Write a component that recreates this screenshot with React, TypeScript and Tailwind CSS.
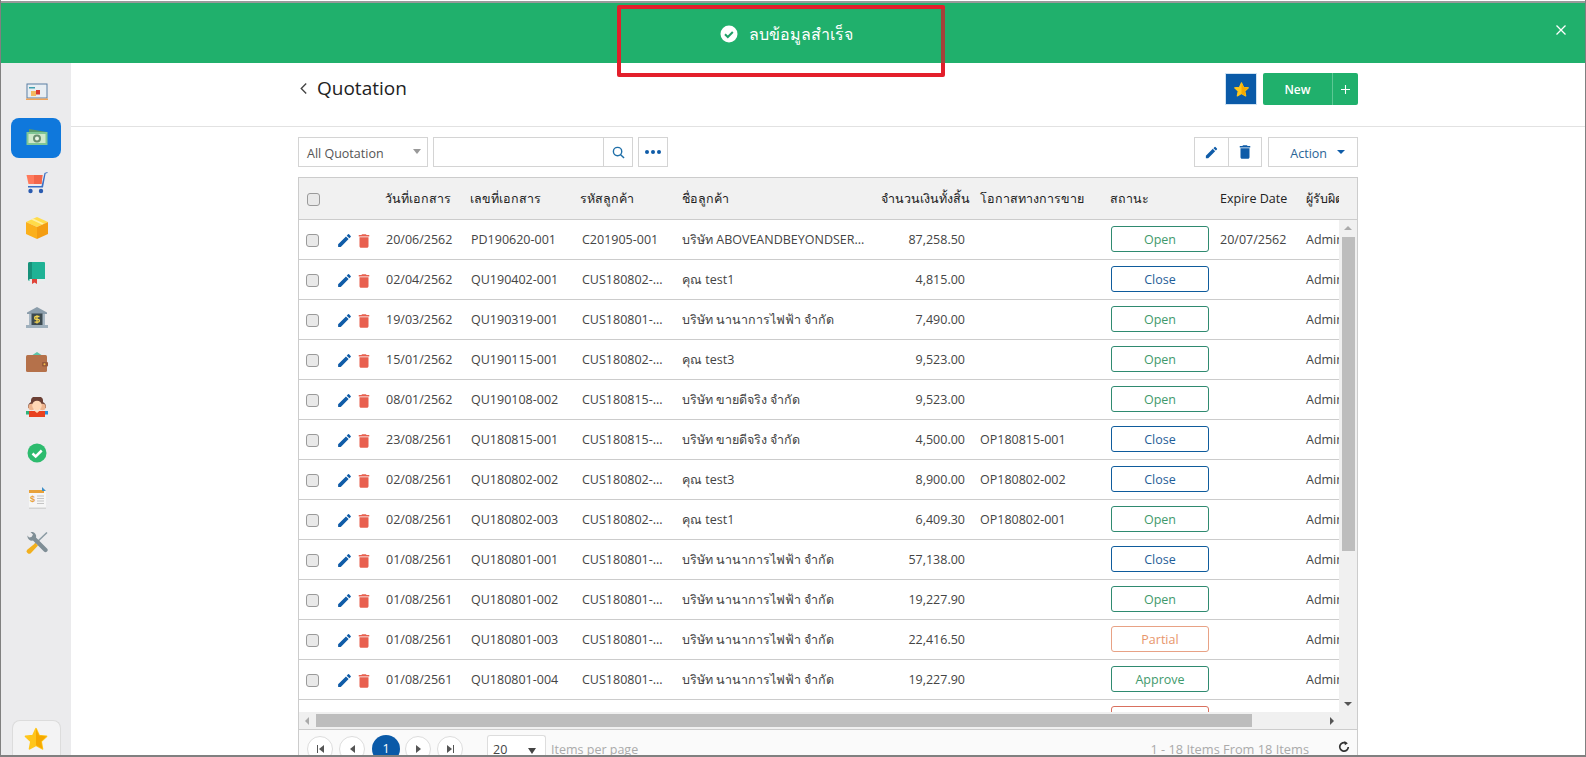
const rows = [
  ['20/06/2562', 'PD190620-001', 'C201905-001', 'บริษัท ABOVEANDBEYONDSER...', '87,258.50', '', 'Open', '20/07/2562'],
  ['02/04/2562', 'QU190402-001', 'CUS180802-...', 'คุณ test1', '4,815.00', '', 'Close', ''],
  ['19/03/2562', 'QU190319-001', 'CUS180801-...', 'บริษัท นานาการไฟฟ้า จำกัด', '7,490.00', '', 'Open', ''],
  ['15/01/2562', 'QU190115-001', 'CUS180802-...', 'คุณ test3', '9,523.00', '', 'Open', ''],
  ['08/01/2562', 'QU190108-002', 'CUS180815-...', 'บริษัท ขายดีจริง จำกัด', '9,523.00', '', 'Open', ''],
  ['23/08/2561', 'QU180815-001', 'CUS180815-...', 'บริษัท ขายดีจริง จำกัด', '4,500.00', 'OP180815-001', 'Close', ''],
  ['02/08/2561', 'QU180802-002', 'CUS180802-...', 'คุณ test3', '8,900.00', 'OP180802-002', 'Close', ''],
  ['02/08/2561', 'QU180802-003', 'CUS180802-...', 'คุณ test1', '6,409.30', 'OP180802-001', 'Open', ''],
  ['01/08/2561', 'QU180801-001', 'CUS180801-...', 'บริษัท นานาการไฟฟ้า จำกัด', '57,138.00', '', 'Close', ''],
  ['01/08/2561', 'QU180801-002', 'CUS180801-...', 'บริษัท นานาการไฟฟ้า จำกัด', '19,227.90', '', 'Open', ''],
  ['01/08/2561', 'QU180801-003', 'CUS180801-...', 'บริษัท นานาการไฟฟ้า จำกัด', '22,416.50', '', 'Partial', ''],
  ['01/08/2561', 'QU180801-004', 'CUS180801-...', 'บริษัท นานาการไฟฟ้า จำกัด', '19,227.90', '', 'Approve', ''],
  ['', '', '', '', '', '', 'Cancel', ''],
]

const pill: Record<string, string> = {
  Open: 'border-[#2f8a70] text-[#3f9a6c]',
  Approve: 'border-[#2f8a70] text-[#3f9a6c]',
  Close: 'border-[#0f5c9c] text-[#1f6098]',
  Partial: 'border-[#e8a285] text-[#e8966c]',
  Cancel: 'border-[#d9705e] text-[#d9705e]',
}

const cols = 'grid grid-cols-[80px_84px_111px_100px_169px_129px_130px_110px_86px_42px]'

function Pencil({ className }: { className: string }) {
  return (
    <svg viewBox="0 0 24 24" className={className} fill="currentColor">
      <path d="M3 17.25V21h3.75L17.81 9.94l-3.75-3.75L3 17.25zM20.71 7.04a1 1 0 0 0 0-1.41l-2.34-2.34a1 1 0 0 0-1.41 0l-1.83 1.83 3.75 3.75 1.83-1.83z" />
    </svg>
  )
}

function Trash({ className }: { className: string }) {
  return (
    <svg viewBox="0 0 24 24" className={className} fill="currentColor">
      <path d="M6 19c0 1.1.9 2 2 2h8c1.1 0 2-.9 2-2V7H6v12zM19 4h-3.5l-1-1h-5l-1 1H5v2h14V4z" />
    </svg>
  )
}

function Star({ className }: { className: string }) {
  return (
    <svg viewBox="0 0 24 24" className={className}>
      <path fill="#ffc61b" stroke="#ffc61b" strokeWidth="1.5" strokeLinejoin="round" d="M12 2.5l2.9 6.3 6.8.8-5 4.7 1.3 6.8-6-3.4-6 3.4 1.3-6.8-5-4.7 6.8-.8z" />
      <path fill="#f5a800" d="M12 2.5l2.9 6.3 6.8.8-5 4.7 1.3 6.8-6-3.4z" />
    </svg>
  )
}

function Checkbox() {
  return <div className="h-[13px] w-[13px] rounded-[3px] border border-[#9a9a9a] bg-[#e9e9e9]" />
}

// sidebar drawings, all on a 22 unit box
const sideIcons = [
  <>
    <rect x="0.5" y="1.5" width="21" height="15" fill="#5b7fa3" />
    <rect x="1.5" y="2.500" width="19" height="13" fill="#e8eef3" />
    <rect x="3" y="5" width="6" height="1.5" fill="#3fa0b0" />
    <rect x="5" y="9" width="5" height="5" fill="#f4b860" />
    <rect x="10" y="8" width="4" height="4.5" fill="#d8372f" />
    <rect x="0" y="16.500" width="22" height="1.5" fill="#f0a458" />
  </>,
  <>
    <path d="M3 2l18 3v3H3z" fill="#5a9a6a" />
    <rect x="0.5" y="5" width="21" height="13" fill="#7fc795" />
    <rect x="2.5" y="7" width="17" height="9" fill="#cfeacb" />
    <circle cx="11" cy="11.5" r="4" fill="#6a8f70" />
    <circle cx="11" cy="11.5" r="2" fill="#e8f5e4" />
  </>,
  <>
    <path d="M0.5 3h16l-1 9h-13z" fill="#ff7a5c" />
    <path d="M8 3h8.5l-1 9H8z" fill="#f2664a" />
    <path d="M21.5 0l-3 1-3 13H2v1.6h15l2.6-14 1.9-.6z" fill="#3a6fc4" />
    <circle cx="4.5" cy="19" r="2.2" fill="#2a5bb0" />
    <circle cx="15" cy="19" r="2.2" fill="#2a5bb0" />
  </>,
  <>
    <path d="M11 0l11 5-11 5L0 5z" fill="#ffdc4a" />
    <path d="M0 5l11 5v12L0 17z" fill="#fbb01c" />
    <path d="M22 5l-11 5v12l11-5z" fill="#f49d12" />
    <path d="M5 2.5l11 5 2-1L7 1.6z" fill="#fff0a0" />
  </>,
  <>
    <path d="M2 2a2 2 0 0 1 2-2h14a1 1 0 0 1 1 1v18H4a2 2 0 0 1-2-2z" fill="#1fb295" />
    <path d="M4 0h2v17H4a2 2 0 0 0-2 2V2a2 2 0 0 1 2-2z" fill="#17917a" />
    <rect x="3.5" y="17" width="15.5" height="2" fill="#e6f0ee" />
    <path d="M6 17h5v5l-2.500-1.500L6 22z" fill="#e0453a" />
  </>,
  <>
    <path d="M11 0l10 5.500v1.500H1V5.500z" fill="#8b9dab" />
    <rect x="3" y="7" width="3" height="11" fill="#a9b8c4" />
    <rect x="16" y="7" width="3" height="11" fill="#a9b8c4" />
    <rect x="5.500" y="6.500" width="11" height="12" fill="#3d4a50" />
    <rect x="0" y="18" width="22" height="3" fill="#9fb0bd" />
    <path d="M13.500 9.500h-3.500a1.200 1.200 0 0 0 0 2.800h2a1.200 1.200 0 0 1 0 2.800H8.500M11 8.200v8.400" fill="none" stroke="#f2d34f" strokeWidth="1.300" />
  </>,
  <>
    <path d="M5 4l6-4 6 4z" fill="#5cc4a8" />
    <rect x="0" y="3" width="21" height="17" rx="1.500" fill="#b5714a" />
    <rect x="16" y="10" width="6" height="4.500" rx="1" fill="#96583a" />
    <circle cx="18.500" cy="12.200" r="1" fill="#f5c04a" />
  </>,
  <>
    <rect x="0" y="14" width="5" height="3.500" fill="#2fb37a" />
    <rect x="17" y="14" width="5" height="3.500" fill="#2a8fd8" />
    <path d="M2 11a4.500 5 0 0 1 4-6h10a4.500 5 0 0 1 4 6z" fill="#6b3f34" />
    <path d="M5 3a6 4 0 0 1 12 0v3H5z" fill="#6b3f34" />
    <circle cx="5.500" cy="10" r="3.200" fill="#eeb48e" />
    <circle cx="16.500" cy="10" r="3.200" fill="#eeb48e" />
    <circle cx="11" cy="8.500" r="4.800" fill="#ffd7b5" />
    <rect x="3" y="14" width="16" height="6" fill="#e8411f" />
    <path d="M8 13.500h6l-3 2.500z" fill="#ffd7b5" />
  </>,
  <>
    <circle cx="11" cy="11" r="9.500" fill="#2dbb6e" />
    <path d="M6.500 11.500l3.200 3 6-6" fill="none" stroke="#fff" strokeWidth="2.500" />
  </>,
  <>
    <rect x="3" y="3" width="17" height="19" fill="#f6f6f6" />
    <rect x="3" y="20.500" width="17" height="1.500" fill="#d4d4d4" />
    <rect x="3" y="3" width="15" height="3" fill="#e8a23a" />
    <path d="M16 0l4 4h-4z" fill="#3f8fc8" />
    <text x="4" y="15" fontSize="9" fontWeight="700" fill="#e8a23a" fontFamily="Liberation Sans, sans-serif">$</text>
    <path d="M11 9h7M11 11.500h7M11 14h7M11 16.500h7" stroke="#c4c4c4" strokeWidth="1" />
  </>,
  <>
    <path d="M21 0.500L9 12" stroke="#8a9aa3" strokeWidth="1.500" />
    <path d="M1.500 3.500a4.500 4.500 0 0 0 5.500 5l11 11a2 2 0 0 0 3-3l-11-11a4.500 4.500 0 0 0-5.500-5.500l2.500 2.500-1.500 2.500-2.500.5z" fill="#7f8e96" />
    <path d="M9.500 11l2.500 2.500-7 7.500a2 2 0 0 1-3.500-3.500z" fill="#f2b01e" />
  </>,
]

export default function App() {
  return (
    <div className="relative flex h-screen w-full flex-col overflow-hidden border-x border-b-2 border-x-[#808080] border-b-[#808080] bg-white font-['Open_Sans',sans-serif] text-[12.5px] text-[#444]">
      <div className="h-[1px] bg-white" />
      <div className="h-[2px] bg-[#9a9a9a]" />

      {/* Green notification bar */}
      <div className="relative flex h-[60px] shrink-0 items-center justify-center bg-[#20b06c] text-white">
        <div className="flex items-center gap-[11px] pr-[14px] pt-[2px]">
          <svg viewBox="0 0 18 18" className="h-[18px] w-[18px]">
            <circle cx="9" cy="9" r="8.500" fill="#fff" />
            <path d="M5 9.300l2.800 2.700 5-5" fill="none" stroke="#20a068" strokeWidth="2" />
          </svg>
          <span className="text-[16px]">ลบข้อมูลสำเร็จ</span>
        </div>
        <svg viewBox="0 0 12 12" className="absolute right-[18px] top-[21px] h-[12px] w-[12px]" stroke="#fff" strokeWidth="1.300">
          <path d="M1.500 1.500l9 9M10.500 1.500l-9 9" />
        </svg>
      </div>

      {/* Red annotation box */}
      <div className="absolute left-[616px] top-[5px] h-[72px] w-[328px] rounded-[2px] border-[4px] border-[#e31f2b]">
        <div className="absolute right-[-4px] top-0 h-[54px] w-[4px] bg-[#a5433a]" />
      </div>

      <div className="flex min-h-0 flex-1">
        {/* Sidebar */}
        <div className="flex w-[70px] shrink-0 flex-col items-center bg-[#ebebed] pt-[10px]">
          {sideIcons.map((icon, i) => (
            <div key={i} className={`mb-[5px] flex h-10 w-[50px] items-center justify-center rounded-lg ${i === 1 ? 'bg-[#0f78dc]' : ''}`}>
              <svg viewBox="0 0 22 22" className="ml-[2px] h-[22px] w-[22px]">{icon}</svg>
            </div>
          ))}
          <div className="mt-auto flex h-[35px] w-[49px] items-start justify-center rounded-t-lg border border-b-0 border-[#dcdcdc] bg-[#f3f3f4] pt-[5px]">
            <Star className="h-[26px] w-[26px]" />
          </div>
        </div>

        {/* Main */}
        <div className="flex min-w-0 flex-1 flex-col">
          <div className="flex h-[64px] shrink-0 items-start justify-between border-b border-[#e2e2e2] px-[227px] pt-[10px]">
            <div className="flex h-[31px] items-center gap-[9px] pl-[1px]">
              <svg viewBox="0 0 10 14" className="h-[13px] w-[9px]" fill="none" stroke="#444" strokeWidth="1.500">
                <path d="M8 1.500L2.500 7 8 12.500" />
              </svg>
              <span className="text-[19px] leading-none text-[#222]">Quotation</span>
            </div>
            <div className="flex items-center gap-[6px]">
              <div className="flex h-[32px] w-[32px] items-center justify-center border border-[#cfe2f2] bg-[#0a5aa8]">
                <Star className="h-[17px] w-[17px]" />
              </div>
              <div className="flex h-[32px] w-[95px] items-center rounded-[2px] bg-[#20b06c] text-white">
                <span className="w-[69px] pt-[1px] text-center text-[12px] font-semibold">New</span>
                <span className="flex h-full flex-1 items-center justify-center border-l border-[#5cc894]">
                  <svg viewBox="0 0 10 10" className="h-[9px] w-[9px]" stroke="#fff" strokeWidth="1.200">
                    <path d="M5 0v10M0 5h10" />
                  </svg>
                </span>
              </div>
            </div>
          </div>

          <div className="flex min-h-0 flex-1 flex-col gap-[10px] px-[227px] pt-[10px]">
            {/* Toolbar */}
            <div className="flex h-[30px] shrink-0 items-stretch">
              <div className="flex w-[130px] items-center justify-between border border-[#d4d4d4] pl-[8px] pr-[6px] text-[#555]">
                <span className="pt-[5px]">All Quotation</span>
                <span className="mb-[2px] h-0 w-0 border-x-[4px] border-t-[5px] border-x-transparent border-t-[#999]" />
              </div>
              <div className="ml-[5px] flex w-[200px] justify-end border border-[#d4d4d4]">
                <div className="flex w-[29px] items-center justify-center border-l border-[#d4d4d4]">
                  <svg viewBox="0 0 14 14" className="h-[13px] w-[13px]" fill="none" stroke="#1f6fa8" strokeWidth="1.500">
                    <circle cx="6" cy="6" r="4.500" />
                    <path d="M9.300 9.300L13 13" />
                  </svg>
                </div>
              </div>
              <div className="ml-[5px] flex w-[30px] items-center justify-center gap-[2px] border border-[#d4d4d4]">
                <span className="h-[4px] w-[4px] rounded-full bg-[#0f5ca8]" />
                <span className="h-[4px] w-[4px] rounded-full bg-[#0f5ca8]" />
                <span className="h-[4px] w-[4px] rounded-full bg-[#0f5ca8]" />
              </div>
              <div className="ml-auto flex w-[68px] border border-[#d4d4d4]">
                <div className="flex flex-1 items-center justify-center border-r border-[#d4d4d4]">
                  <Pencil className="h-[15px] w-[15px] text-[#0f5ca8]" />
                </div>
                <div className="flex flex-1 items-center justify-center">
                  <Trash className="h-[18px] w-[18px] text-[#0f5ca8]" />
                </div>
              </div>
              <div className="ml-[6px] flex w-[90px] items-center justify-end gap-[10px] border border-[#d4d4d4] pr-[12px] text-[#2a6496]">
                <span className="pt-[5px]">Action</span>
                <span className="h-0 w-0 border-x-[4px] border-t-[4px] border-x-transparent border-t-[#0f5ca8]" />
              </div>
            </div>

            {/* Table */}
            <div className="flex min-h-0 flex-1 flex-col border border-b-0 border-[#ccc]">
              <div className="flex h-[42px] shrink-0 items-center border-b border-[#ccc] bg-[#f1f1f1] pr-[18px] text-[#222]">
                <div className="flex h-full w-[1041px] overflow-hidden">
                  <div className={`${cols} h-full w-full shrink-0 items-center pt-[2px]`}>
                    <div className="pl-[8px]"><Checkbox /></div>
                    <div className="pl-[6px]">วันที่เอกสาร</div>
                    <div className="pl-[7px]">เลขที่เอกสาร</div>
                    <div className="pl-[6px]">รหัสลูกค้า</div>
                    <div className="pl-[8px]">ชื่อลูกค้า</div>
                    <div className="whitespace-nowrap pl-[38px]">จำนวนเงินทั้งสิ้น</div>
                    <div className="whitespace-nowrap pl-[8px]">โอกาสทางการขาย</div>
                    <div className="pl-[8px]">สถานะ</div>
                    <div className="whitespace-nowrap pl-[8px]">Expire Date</div>
                    <div className="overflow-hidden whitespace-nowrap pl-[8px]">ผู้รับผิดชอบ</div>
                  </div>
                </div>
              </div>

              <div className="flex min-h-0 flex-1">
                <div className="min-w-0 flex-1 overflow-hidden">
                  {rows.map((r, i) => (
                    <div key={i} className={`${cols} h-10 items-center border-b border-[#ccc]`}>
                      <div className="flex items-center pl-[7px] pt-[2px]">
                        {r[0] && (
                          <>
                            <Checkbox />
                            <Pencil className="ml-[17px] h-[17px] w-[17px] text-[#0f5ca8]" />
                            <Trash className="ml-[2px] h-[18px] w-[18px] text-[#e8604f]" />
                          </>
                        )}
                      </div>
                      <div className="pl-[7px] pt-[2px]">{r[0]}</div>
                      <div className="pl-[8px] pt-[2px]">{r[1]}</div>
                      <div className="pl-[8px] pt-[2px]">{r[2]}</div>
                      <div className="whitespace-nowrap pl-[8px] pt-[2px]">{r[3]}</div>
                      <div className="pr-[7px] pt-[2px] text-right">{r[4]}</div>
                      <div className="pl-[8px] pt-[2px]">{r[5]}</div>
                      <div className="pl-[9px]">
                        <div className={`mt-[-1px] flex h-[26px] w-[98px] items-center justify-center rounded-[3px] border bg-white pt-[2px] ${pill[r[6]]}`}>{r[6]}</div>
                      </div>
                      <div className="pl-[8px] pt-[2px]">{r[7]}</div>
                      <div className="overflow-hidden pl-[8px] pt-[2px]">{r[0] && 'Admin'}</div>
                    </div>
                  ))}
                </div>
                <div className="flex w-[18px] shrink-0 flex-col items-center bg-[#f0f0f0]">
                  <span className="mt-[6px] h-0 w-0 border-x-[4px] border-b-[4px] border-x-transparent border-b-[#aaa]" />
                  <div className="mt-[7px] h-[314px] w-[13px] bg-[#bdbdbd]" />
                  <span className="mb-[6px] mt-auto h-0 w-0 border-x-[4px] border-t-[4px] border-x-transparent border-t-[#555]" />
                </div>
              </div>

              {/* Horizontal scrollbar */}
              <div className="flex h-[18px] shrink-0 items-center border-b border-[#ccc] bg-[#f0f0f0]">
                <span className="ml-[6px] h-0 w-0 border-y-[4px] border-r-[4px] border-y-transparent border-r-[#aaa]" />
                <div className="ml-[7px] h-[13px] w-[936px] bg-[#bdbdbd]" />
                <span className="ml-[78px] h-0 w-0 border-y-[4px] border-l-[4px] border-y-transparent border-l-[#555]" />
              </div>

              {/* Pager */}
              <div className="flex h-[25px] shrink-0 items-start overflow-hidden bg-[#fafafa] pl-[8px] pr-[7px] pt-[5px]">
                {['first', 'prev', 'page', 'next', 'last'].map((p) => (
                  <div key={p} className={`flex shrink-0 items-center justify-center rounded-full ${p === 'page' ? 'ml-[1px] mr-[5px] h-[28px] w-[28px] bg-[#0a5aa8] text-white' : 'mr-[6px] mt-[1px] h-[26px] w-[26px] border border-[#ddd] bg-white'}`}>
                    {p === 'page' && '1'}
                    {p === 'first' && <span className="flex items-center"><span className="mr-[1px] h-[8px] w-[1px] bg-[#555]" /><span className="h-0 w-0 border-y-[4px] border-r-[5px] border-y-transparent border-r-[#555]" /></span>}
                    {p === 'prev' && <span className="h-0 w-0 border-y-[4px] border-r-[5px] border-y-transparent border-r-[#555]" />}
                    {p === 'next' && <span className="h-0 w-0 border-y-[4px] border-l-[5px] border-y-transparent border-l-[#555]" />}
                    {p === 'last' && <span className="flex items-center"><span className="h-0 w-0 border-y-[4px] border-l-[5px] border-y-transparent border-l-[#555]" /><span className="ml-[1px] h-[8px] w-[1px] bg-[#555]" /></span>}
                  </div>
                ))}
                <div className="ml-[18px] flex h-[30px] w-[59px] shrink-0 items-start justify-between rounded-t-[3px] border border-b-0 border-[#ddd] bg-white pl-[5px] pr-[9px] pt-[5px]">
                  <span>20</span>
                  <span className="mt-[7px] h-0 w-0 border-x-[4px] border-t-[6px] border-x-transparent border-t-[#444]" />
                </div>
                <span className="ml-[5px] mt-[6px] whitespace-nowrap text-[#aaa]">Items per page</span>
                <span className="ml-auto mt-[5px] whitespace-nowrap text-[12.8px] text-[#aaa]">1 - 18 Items From 18 Items</span>
                <svg viewBox="0 0 14 14" className="ml-[29px] mt-[6px] h-[12px] w-[12px] shrink-0" fill="none" stroke="#333" strokeWidth="2">
                  <path d="M9.500 2.500A5 5 0 1 0 12 7" />
                  <path d="M7.500 0l4 2.500-3.500 2.500z" fill="#333" stroke="none" />
                </svg>
              </div>
            </div>
          </div>
        </div>
      </div>
    </div>
  )
}
